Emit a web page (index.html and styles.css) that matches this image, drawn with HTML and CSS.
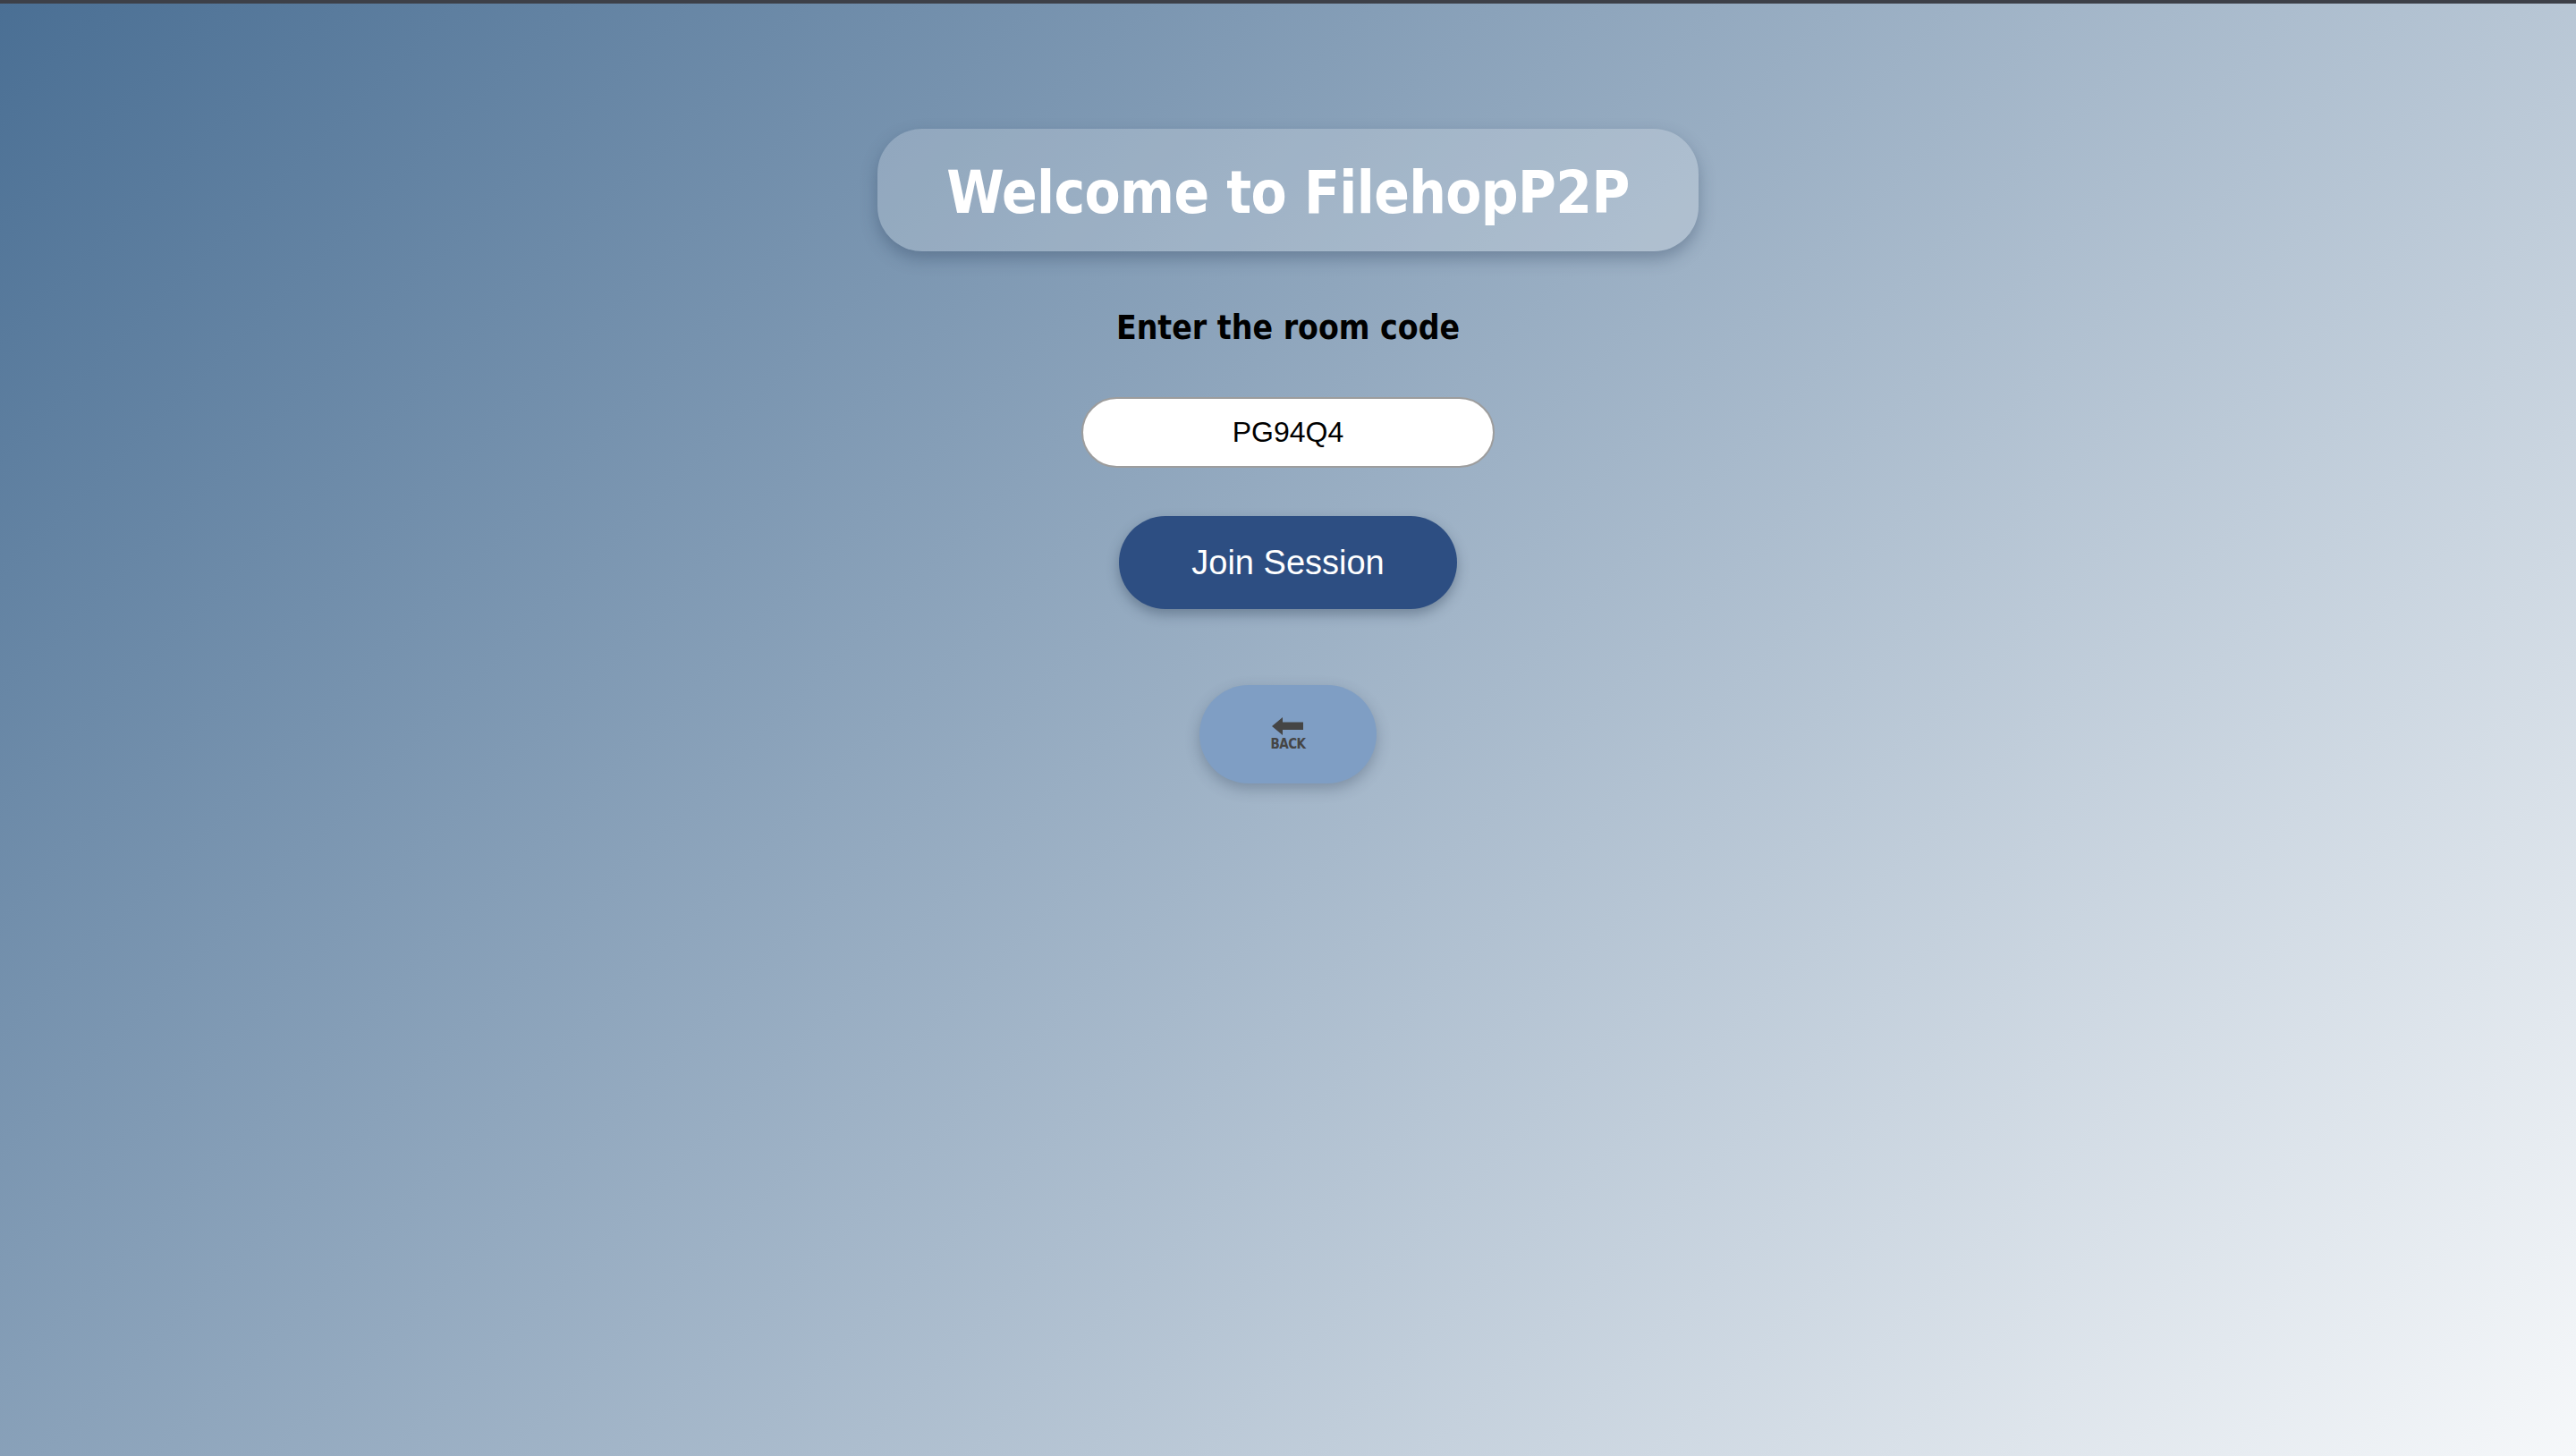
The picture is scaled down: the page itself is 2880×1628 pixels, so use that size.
FILE: index.html
```html
<!DOCTYPE html>
<html lang="en">
<head>
<meta charset="utf-8">
<title>FilehopP2P</title>
<link rel="stylesheet" href="styles.css">
</head>
<body>
<main class="page">
  <div class="title-box"><h1 class="title">Welcome to FilehopP2P</h1></div>
  <h2 class="prompt">Enter the room code</h2>
  <input class="code-input" type="text" value="PG94Q4">
  <button class="join-btn" type="button">Join Session</button>
  <button class="back-btn" type="button">
    <span class="back-inner">
      <svg class="back-arrow" width="36" height="20" viewBox="0 0 36 20">
        <polygon points="0,10 12,0 12,5.5 35,5.5 35,14 12,14 12,20" fill="#454545"/>
      </svg>
      <span class="back-label">BACK</span>
    </span>
  </button>
</main>
</body>
</html>
```

FILE: styles.css
```css
html, body {
  margin: 0;
  padding: 0;
}
body {
  min-height: 100vh;
  box-sizing: border-box;
  border-top: 4px solid #3d4048;
  background: linear-gradient(135deg, #4a6f94 0%, #f6f8fa 100%);
  font-family: "DejaVu Sans", sans-serif;
}
.page {
  display: flex;
  flex-direction: column;
  align-items: center;
  padding-top: 140px;
}
.title-box {
  width: 918px;
  height: 137px;
  box-sizing: border-box;
  padding-top: 6px;
  border-radius: 50px;
  background: rgba(255, 255, 255, 0.2);
  box-shadow: 0 8px 18px rgba(40, 60, 90, 0.35);
  display: flex;
  align-items: center;
  justify-content: center;
}
.title {
  margin: 0;
  font-family: "DejaVu Sans Condensed", "DejaVu Sans", sans-serif;
  font-weight: bold;
  font-size: 65px;
  line-height: 80px;
  color: #ffffff;
  letter-spacing: -0.6px;
}
.prompt {
  margin: 64px 0 0;
  font-family: "DejaVu Sans Condensed", "DejaVu Sans", sans-serif;
  font-weight: bold;
  font-size: 37px;
  line-height: 44px;
  color: #000;
}
.code-input {
  margin-top: 55px;
  width: 462px;
  height: 79px;
  box-sizing: border-box;
  border: 2px solid #9d9d9d;
  border-radius: 40px;
  background: #fff;
  text-align: center;
  font-family: "Liberation Sans", Arial, sans-serif;
  font-size: 32px;
  color: #000;
  outline: none;
  padding: 0 20px;
}
.join-btn {
  margin-top: 54px;
  width: 378px;
  height: 104px;
  border: none;
  border-radius: 52px;
  background: #2d4e82;
  color: #fff;
  font-family: "Liberation Sans", Arial, sans-serif;
  font-size: 38px;
  box-shadow: 0 6px 14px rgba(30, 45, 70, 0.35);
  padding: 0;
}
.back-btn {
  margin-top: 85px;
  width: 198px;
  height: 110px;
  border: none;
  border-radius: 55px;
  background: #7f9ec4;
  box-shadow: 0 6px 16px rgba(40, 55, 80, 0.3);
  padding: 0;
  display: flex;
  align-items: center;
  justify-content: center;
}
.back-inner {
  display: flex;
  flex-direction: column;
  align-items: center;
  gap: 2px;
}
.back-arrow {
  display: block;
}
.back-label {
  font-family: "DejaVu Sans Condensed", "DejaVu Sans", sans-serif;
  font-weight: bold;
  font-size: 15px;
  line-height: 16px;
  color: #454545;
  letter-spacing: -0.5px;
}
```
